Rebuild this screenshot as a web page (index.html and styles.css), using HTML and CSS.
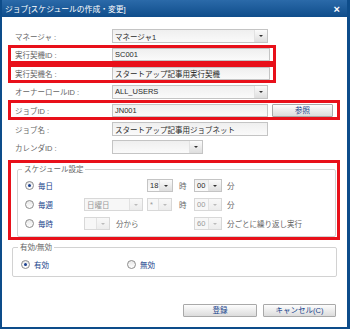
FILE: index.html
```html
<!DOCTYPE html>
<html>
<head>
  <title>ジョブ[スケジュールの作成・変更]</title>
  <link rel="stylesheet" href="styles.css">
</head>
<body>
  <div class="window">
    <div class="titlebar">
      <span class="title">ジョブ[スケジュールの作成・変更]</span>
      <span class="close">×</span>
    </div>

    <div class="content">
      <div class="row r-manager">
        <span class="lbl">マネージャ :</span>
        <div class="combo w156"><span class="val">マネージャ1</span><span class="trigger"></span></div>
      </div>

      <div class="row mark w268 r-box1">
        <span class="lbl">実行契機ID :</span>
        <div class="text w158 short">SC001</div>
      </div>

      <div class="row mark w268 r-box2">
        <span class="lbl">実行契機名 :</span>
        <div class="text w158 short">スタートアップ記事用実行契機</div>
      </div>

      <div class="row r-owner">
        <span class="lbl">オーナーロールID :</span>
        <div class="combo w156"><span class="val">ALL_USERS</span><span class="trigger"></span></div>
      </div>

      <div class="row mark w332 r-box3">
        <span class="lbl">ジョブID :</span>
        <div class="text w156 short">JN001</div>
        <button class="btn ref">参照</button>
      </div>

      <div class="row r-std">
        <span class="lbl">ジョブ名 :</span>
        <div class="text w156">スタートアップ記事用ジョブネット</div>
      </div>

      <div class="row r-std">
        <span class="lbl">カレンダID :</span>
        <div class="combo w91"><span class="val"></span><span class="trigger"></span></div>
      </div>

      <!-- スケジュール設定 -->
      <div class="mark w332 box4">
        <fieldset class="group sched">
          <legend>スケジュール設定</legend>
          <div class="srow">
            <span class="opt"><span class="radio on"></span><span class="olbl">毎日</span></span>
            <span></span>
            <div class="combo w26"><span class="val">18</span><span class="trigger"></span></div>
            <span class="unit">時</span>
            <div class="combo w28"><span class="val">00</span><span class="trigger"></span></div>
            <span class="unit">分</span>
          </div>
          <div class="srow">
            <span class="opt"><span class="radio"></span><span class="olbl">毎週</span></span>
            <div class="combo w59 off"><span class="val">日曜日</span><span class="trigger"></span></div>
            <div class="combo w25 off"><span class="val">*</span><span class="trigger"></span></div>
            <span class="unit">時</span>
            <div class="combo w28 off"><span class="val">00</span><span class="trigger"></span></div>
            <span class="unit">分</span>
          </div>
          <div class="srow">
            <span class="opt"><span class="radio"></span><span class="olbl">毎時</span></span>
            <span class="cell2"><span class="combo w26 off"><span class="val"></span><span class="trigger"></span></span><span class="unit from">分から</span></span>
            <span></span>
            <span></span>
            <div class="combo w28 off"><span class="val">60</span><span class="trigger"></span></div>
            <span class="unit">分ごとに繰り返し実行</span>
          </div>
        </fieldset>
      </div>

      <fieldset class="group valid">
        <legend>有効/無効</legend>
        <div class="vrow">
          <span class="opt"><span class="radio on"></span><span class="olbl">有効</span></span>
          <span class="opt"><span class="radio"></span><span class="olbl">無効</span></span>
        </div>
      </fieldset>

      <div class="actions">
        <button class="btn w74">登録</button>
        <button class="btn w73">キャンセル(C)</button>
      </div>
    </div>
  </div>
</body>
</html>
```

FILE: styles.css
```css
/* ダイアログ全体 */
body {
  margin: 0;
  font-family: "Liberation Sans", "Noto Sans CJK JP", sans-serif;
  font-size: 7.5px;
  color: #555;
}

.window {
  width: 350px;
  height: 329px;
  box-sizing: border-box;
  padding: 0 3px 2px 2px;
  background: #0d4c8a;
  display: flex;
  flex-direction: column;
}

.titlebar {
  height: 17px;
  flex: none;
  display: flex;
  align-items: center;
  justify-content: space-between;
  padding: 0 7px 0 3px;
  color: #fff;
  background: linear-gradient(#2b6aa9, #0f4d8b);
}

.title {
  font-size: 7.8px;
}

.close {
  font-size: 11px;
  font-weight: bold;
}

.content {
  flex: 1;
  background: #fff;
  padding-top: 10px;
}

/* フォーム行 */
.row {
  display: flex;
  align-items: center;
  margin-left: 6px;
  padding-left: 7px;
  box-sizing: border-box;
}

.r-manager { height: 18px; }
.r-owner { height: 17px; }
.r-std { height: 18px; }
.r-box1 { height: 19px; }
.r-box2 { height: 19px; }
.r-box3 { height: 20px; }

.mark {
  border: 3px solid #e8101a;
  padding-left: 4px;
}

.w268 { width: 268px; }
.w332 { width: 332px; }

.lbl {
  width: 97px;
  flex: none;
  color: #666;
  white-space: nowrap;
}

/* 入力欄 */
.text,
.combo {
  height: 14px;
  box-sizing: border-box;
  border: 1px solid #c4c4c4;
  background: linear-gradient(#efefef, #fafafa);
  color: #2a2a2a;
  display: flex;
  align-items: center;
  white-space: nowrap;
  overflow: hidden;
}

.text {
  padding-left: 2px;
}

.text.short {
  height: 13px;
}

.combo .val {
  flex: 1;
  padding-left: 2px;
}

.combo .trigger {
  width: 12px;
  height: 100%;
  flex: none;
  background: linear-gradient(#fbfbfb, #dedede);
  border-left: 1px solid #e2e2e2;
  position: relative;
}

.combo .trigger::after {
  content: "";
  position: absolute;
  left: 4px;
  top: 5px;
  border-left: 2px solid transparent;
  border-right: 2px solid transparent;
  border-top: 2px solid #333;
}

.combo.off {
  color: #999;
  border-color: #d8d8d8;
  background: #f7f7f7;
}

.combo.off .trigger {
  background: linear-gradient(#f8f8f8, #ececec);
}

.combo.off .trigger::after {
  border-top-color: #bbb;
}

.w156 { width: 156px; }
.w158 { width: 158px; }
.w91 { width: 91px; }
.w59 { width: 59px; }
.w28 { width: 28px; }
.w26 { width: 26px; }
.w25 { width: 25px; }

/* ボタン */
.btn {
  height: 13px;
  padding: 0;
  border: 1px solid #a9a9a9;
  border-radius: 1px;
  background: linear-gradient(#fdfdfd, #dcdcdc);
  color: #15428b;
  font-family: inherit;
  font-size: 7.5px;
  line-height: 11px;
}

.btn.ref {
  width: 61px;
  margin-left: 4px;
}

.w74 { width: 74px; }
.w73 { width: 73px; }

/* グループ */
.group {
  border: 1px solid #d2d2d2;
  border-radius: 2px;
  box-sizing: border-box;
  min-width: 0;
}

.group legend {
  margin-left: -3px;
  padding: 0 2px;
  color: #666;
  line-height: 13px;
}

.box4 {
  margin: 4px 0 0 6px;
  height: 80px;
  box-sizing: border-box;
}

.sched {
  height: 74px;
  margin: 0 1px 0 2px;
  padding: 0 0 3px 7px;
}

.srow {
  display: grid;
  grid-template-columns: 59px 63px 32px 15px 33px auto;
  align-items: center;
  height: 19px;
}

.srow .combo {
  height: 13px;
}

.cell2 {
  display: flex;
  align-items: center;
  white-space: nowrap;
}

.unit {
  white-space: nowrap;
  color: #666;
}

.unit.from {
  margin-left: 6px;
}

.opt {
  display: flex;
  align-items: center;
}

.radio {
  width: 9px;
  height: 9px;
  box-sizing: border-box;
  border: 1px solid #8c8c8c;
  border-radius: 50%;
  background: linear-gradient(#e8e8e8, #fff);
  position: relative;
}

.radio.on::after {
  content: "";
  position: absolute;
  left: 2px;
  top: 2px;
  width: 3px;
  height: 3px;
  border-radius: 50%;
  background: #1a3f8f;
}

.olbl {
  margin-left: 4px;
  color: #15428b;
}

.valid {
  width: 325px;
  height: 36px;
  margin: 1px 0 0 10px;
  padding: 0 0 1px 8px;
}

.vrow {
  display: grid;
  grid-template-columns: 106px auto;
  align-items: center;
  height: 20px;
}

.actions {
  display: flex;
  justify-content: flex-end;
  gap: 6px;
  margin-top: 27px;
  padding-right: 11px;
}
```
